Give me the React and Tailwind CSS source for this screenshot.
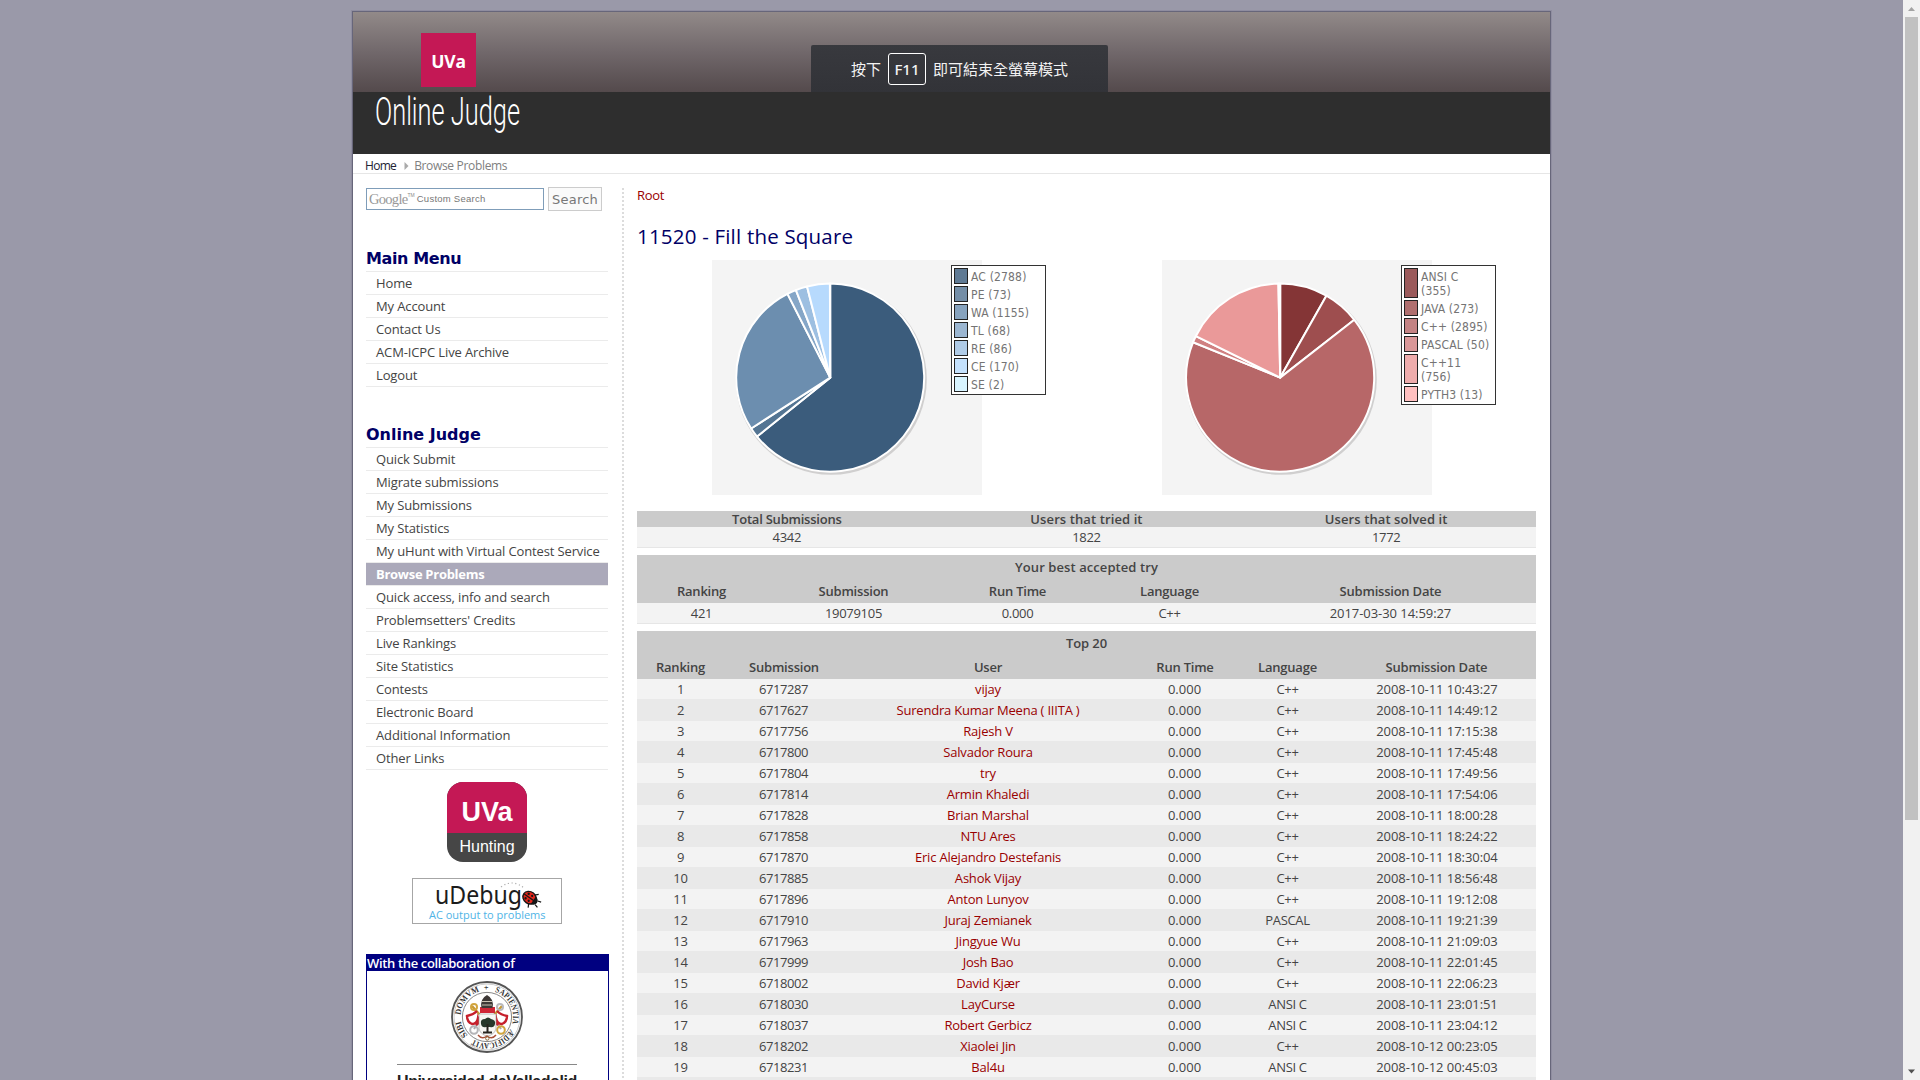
import React from 'react';

const mainMenu = ['Home', 'My Account', 'Contact Us', 'ACM-ICPC Live Archive', 'Logout'];

const judgeMenu = [
  'Quick Submit',
  'Migrate submissions',
  'My Submissions',
  'My Statistics',
  'My uHunt with Virtual Contest Service',
  'Browse Problems',
  'Quick access, info and search',
  "Problemsetters' Credits",
  'Live Rankings',
  'Site Statistics',
  'Contests',
  'Electronic Board',
  'Additional Information',
  'Other Links',
];

const verdicts = [
  { label: 'AC', count: 2788, color: '#3b5c7c' },
  { label: 'PE', count: 73, color: '#547593' },
  { label: 'WA', count: 1155, color: '#6c8eaf' },
  { label: 'TL', count: 68, color: '#85a6c7' },
  { label: 'RE', count: 86, color: '#9dbfe1' },
  { label: 'CE', count: 170, color: '#b7dafd' },
  { label: 'SE', count: 2, color: '#cff2ff' },
];

const languages = [
  { label: 'ANSI C', count: 355, color: '#843536', wrap: true },
  { label: 'JAVA', count: 273, color: '#9e4e4f' },
  { label: 'C++', count: 2895, color: '#b76768' },
  { label: 'PASCAL', count: 50, color: '#d08081' },
  { label: 'C++11', count: 756, color: '#ea9999', wrap: true },
  { label: 'PYTH3', count: 13, color: '#ffb2b2' },
];

const top = [
  ['6717287', 'vijay', 'C++', '2008-10-11 10:43:27'],
  ['6717627', 'Surendra Kumar Meena ( IIITA )', 'C++', '2008-10-11 14:49:12'],
  ['6717756', 'Rajesh V', 'C++', '2008-10-11 17:15:38'],
  ['6717800', 'Salvador Roura', 'C++', '2008-10-11 17:45:48'],
  ['6717804', 'try', 'C++', '2008-10-11 17:49:56'],
  ['6717814', 'Armin Khaledi', 'C++', '2008-10-11 17:54:06'],
  ['6717828', 'Brian Marshal', 'C++', '2008-10-11 18:00:28'],
  ['6717858', 'NTU Ares', 'C++', '2008-10-11 18:24:22'],
  ['6717870', 'Eric Alejandro Destefanis', 'C++', '2008-10-11 18:30:04'],
  ['6717885', 'Ashok Vijay', 'C++', '2008-10-11 18:56:48'],
  ['6717896', 'Anton Lunyov', 'C++', '2008-10-11 19:12:08'],
  ['6717910', 'Juraj Zemianek', 'PASCAL', '2008-10-11 19:21:39'],
  ['6717963', 'Jingyue Wu', 'C++', '2008-10-11 21:09:03'],
  ['6717999', 'Josh Bao', 'C++', '2008-10-11 22:01:45'],
  ['6718002', 'David Kjær', 'C++', '2008-10-11 22:06:23'],
  ['6718030', 'LayCurse', 'ANSI C', '2008-10-11 23:01:51'],
  ['6718037', 'Robert Gerbicz', 'ANSI C', '2008-10-11 23:04:12'],
  ['6718202', 'Xiaolei Jin', 'C++', '2008-10-12 00:23:05'],
  ['6718231', 'Bal4u', 'ANSI C', '2008-10-12 00:45:03'],
];

function Menu({ title, items, active, tracking }) {
  return (
    <section>
      <h2 className={`h-[26px] border-b border-[#ebebeb] font-['DejaVu_Sans','Open_Sans',sans-serif] text-[16px] leading-[26px] font-bold text-[#000066] ${tracking}`}>
        {title}
      </h2>
      <ul>
        {items.map((item) => (
          <li
            key={item}
            className={
              item === active
                ? 'h-[23px] border-b border-[#ebebeb] bg-[#aba9ba] bg-clip-padding pl-[10px] leading-[23px] font-bold tracking-[-0.28px] whitespace-nowrap text-white'
                : 'h-[23px] border-b border-[#ebebeb] pl-[10px] leading-[23px] tracking-[-0.13px] whitespace-nowrap'
            }
          >
            {item}
          </li>
        ))}
      </ul>
    </section>
  );
}

function Pie({ data }) {
  const cx = 118.2;
  const cy = 117.6;
  const r = 94;
  const total = data.reduce((sum, d) => sum + d.count, 0);
  let acc = 0;
  const point = (v) => {
    const a = (v / total) * Math.PI * 2 - Math.PI / 2;
    return `${(cx + r * Math.cos(a)).toFixed(2)} ${(cy + r * Math.sin(a)).toFixed(2)}`;
  };
  return (
    <svg width="270" height="235" className="block bg-[#f4f4f4]">
      <circle cx={cx + 1} cy={cy + 1.6} r={r + 1.6} fill="#d0cfcf" />
      {data.map((d) => {
        const start = point(acc);
        acc += d.count;
        const end = point(acc);
        const large = d.count / total > 0.5 ? 1 : 0;
        return (
          <path
            key={d.label}
            d={`M${cx} ${cy} L${start} A${r} ${r} 0 ${large} 1 ${end} Z`}
            fill={d.color}
            stroke="#fff"
            strokeWidth="2"
            strokeLinejoin="round"
          />
        );
      })}
    </svg>
  );
}

function Chart({ data }) {
  return (
    <div className="relative w-[270px]">
      <Pie data={data} />
      <ul className="absolute top-[5px] left-[239px] flex w-[95px] flex-col gap-[2px] border border-[#333] bg-white p-[2px] font-['DejaVu_Sans_Condensed','DejaVu_Sans',sans-serif] text-[12px] leading-[14px] tracking-[0.16px] text-[#747474]">
        {data.map((d) => (
          <li key={d.label} className="flex gap-[3px]">
            <span className="w-[14px] border border-[#222]" style={{ backgroundColor: d.color + 'd0' }} />
            <span className="pt-[2px] whitespace-nowrap">
              {d.label}
              {d.wrap ? <br /> : ' '}({d.count})
            </span>
          </li>
        ))}
      </ul>
    </div>
  );
}

const triple = 'grid grid-cols-3';
const bestCols = 'grid grid-cols-[129px_175px_153px_151px_1fr]';
const topCols = 'grid grid-cols-[87px_120px_288px_106px_99px_1fr]';

function HeadRow({ cols, cells, h = 'h-6 leading-6' }) {
  return (
    <div className={`${cols} ${h} bg-[#cbcbcb] font-semibold`}>
      {cells.map((c) => (
        <div key={c} className={c.startsWith('Users') ? 'tracking-[0.1px]' : 'tracking-[-0.22px]'}>
          {c}
        </div>
      ))}
    </div>
  );
}

function Seal() {
  return (
    <svg width="72" height="72" viewBox="0 0 72 72" className="block overflow-visible">
      <defs>
        <path id="motto" d="M19.090 56.150 A26.300 26.300 0 1 1 19.450 56.440" />
      </defs>
      <circle cx="36" cy="36" r="35" fill="#fff" stroke="#555" strokeWidth="1.8" />
      <circle cx="36" cy="36" r="33" fill="none" stroke="#aaa" strokeWidth="0.6" />
      <circle cx="36" cy="36" r="24.600" fill="none" stroke="#777" strokeWidth="0.9" />
      <g className="font-['Liberation_Serif',serif] text-[8.500px] font-bold" fill="#333">
        <text>
          <textPath href="#motto" startOffset="3" textLength="16">SIBI</textPath>
        </text>
        <text>
          <textPath href="#motto" startOffset="25" textLength="32" lengthAdjust="spacingAndGlyphs">DOMVM</textPath>
        </text>
        <text>
          <textPath href="#motto" startOffset="61.500">+</textPath>
        </text>
        <text>
          <textPath href="#motto" startOffset="72.500" textLength="40" lengthAdjust="spacingAndGlyphs">SAPIENTIA</textPath>
        </text>
        <text>
          <textPath href="#motto" startOffset="118" textLength="43" lengthAdjust="spacingAndGlyphs">ÆDIFICAVIT</textPath>
        </text>
      </g>
      <g fill="none" strokeWidth="2">
        <path d="M29 34 L21 25 M43 34 L51 25" stroke="#c79a35" strokeWidth="2.4" />
        <circle cx="23" cy="26" r="3" stroke="#d1a53f" />
        <circle cx="49" cy="26" r="3" stroke="#b9b9bd" />
        <path d="M30 38 L23 48 M43 38 L50 48" stroke="#aaa" />
        <circle cx="23" cy="49" r="3.800" stroke="#b5b5b8" />
        <circle cx="50" cy="49" r="3.800" stroke="#d1a53f" />
        <path d="M26 30 q-4 4 -10 5 q0 6 5 8 q5 0 6 -6 q2 5 -2 7 M46 30 q4 4 10 5 q0 6 -5 8 q-5 0 -6 -6 q-2 5 2 7" stroke="#c6202c" strokeWidth="2.4" />
      </g>
      <path d="M29 32 h15 v-6 h-15z" fill="#cf2636" />
      <path d="M30.500 27 q-2 -9 5.500 -13 q7.500 4 5.500 13z" fill="#3d3836" />
      <path d="M31 24 h10 M31 20.500 h10" stroke="#c9c1b2" strokeWidth="1" />
      <path d="M28 33 h17 v15 q-2 6 -8.500 7 q-6.500 -1 -8.500 -7z" fill="#f7f7f4" stroke="#999" strokeWidth="0.6" />
      <path d="M30 43 q-1 -5 4 -5 q3 -3 6 0 q5 1 4 5 q-1 4 -5 3 h-4 q-4 1 -5 -3z" fill="#26382b" />
      <path d="M36.500 43 v8 M32 51.500 h9" stroke="#26251f" strokeWidth="2" />
      <path d="M27 54 q4 5 9 1 q5 4 9 -1" fill="none" stroke="#a85038" strokeWidth="1.4" />
      <circle cx="36.300" cy="57.500" r="1.700" fill="none" stroke="#8a6a39" />
    </svg>
  );
}

function UDebug() {
  return (
    <svg width="150" height="46" viewBox="0 0 148 44" className="block overflow-visible border border-[#a6a6a6]">
      <text x="22" y="25" textLength="87" lengthAdjust="spacingAndGlyphs" className="font-['Noto_Sans','Open_Sans',sans-serif] text-[25px]" fill="#1c1c1c">
        uDebug
      </text>
      <path d="M88 8 Q100 -1 112 10" fill="none" stroke="#aaa" strokeWidth="1.1" strokeDasharray="1.200 2.600" />
      <g transform="rotate(35 117 19)">
        <ellipse cx="116.500" cy="19" rx="7" ry="6" fill="#e1261c" stroke="#161616" strokeWidth="1.400" />
        <path d="M110 19 h13" stroke="#161616" strokeWidth="1.200" />
        <path d="M121 14.500 q4.500 1 4.500 4.500 q0 3.500 -4.500 4.500z" fill="#161616" />
        <path d="M119 14 l3 -3 M119 24 l2 4 M125 17 l3.500 -1 M125 21.500 l3.500 1" stroke="#161616" strokeWidth="1.200" />
        <g fill="#161616">
          <circle cx="113.500" cy="16.300" r="1.200" />
          <circle cx="117.500" cy="16" r="1.100" />
          <circle cx="113.500" cy="21.700" r="1.200" />
          <circle cx="117.500" cy="22" r="1.100" />
        </g>
      </g>
      <text x="16" y="40" textLength="116.500" className="font-['Open_Sans',sans-serif] text-[11px]" fill="#4fb4e6">
        AC output to problems
      </text>
    </svg>
  );
}

function Sidebar() {
  return (
    <aside className="ml-[13px] w-[243px] shrink-0">
      <div className="flex h-[24px] items-center gap-1">
        <div className="flex h-[22px] w-[178px] items-center border border-[#7f9db9] pl-[2px] text-[#8c8c8c]">
          <span className="font-['Liberation_Serif',serif] text-[14.500px] leading-none tracking-[-0.7px] text-[#999]">Google</span>
          <span className="self-start pt-[3px] font-['Liberation_Sans',sans-serif] text-[5px] leading-[6px]">TM</span>
          <span className="ml-[2px] font-['Liberation_Sans',sans-serif] text-[9.500px] leading-none tracking-[0.25px] text-[#777]">Custom Search</span>
        </div>
        <button className="h-[24px] w-[54px] border border-[#ccc] bg-[#fafafa] pt-px font-['DejaVu_Sans',sans-serif] text-[13px] leading-[21px] tracking-[0.2px] text-[#777]">
          Search
        </button>
      </div>
      <div className="mt-[35px] w-[242px]">
        <Menu title="Main Menu" items={mainMenu} tracking="tracking-[-0.4px]" />
        <div className="h-[35px]" />
        <Menu title="Online Judge" items={judgeMenu} active="Browse Problems" tracking="tracking-[0px]" />
      </div>
      <div className="mt-[12px] flex w-[242px] flex-col items-center">
        <div className="flex h-[80px] w-[80px] flex-col overflow-hidden rounded-[16px] bg-[#464646] text-center font-['Liberation_Sans',sans-serif] text-white">
          <div className="h-[51px] bg-[#c41855] text-[27px] leading-[60px] font-bold">UVa</div>
          <div className="text-[16px] leading-[27px]">Hunting</div>
        </div>
        <div className="mt-[16px]">
          <UDebug />
        </div>
      </div>
      <div className="mt-[30px] h-[200px] border border-[#000080]">
        <div className="h-[16px] bg-[#000080] leading-[17px] font-semibold tracking-[-0.35px] text-white">With the collaboration of</div>
        <div className="mt-[10px] flex flex-col items-center pr-[1px]">
          <Seal />
          <div className="mt-[11px] h-px w-[180px] bg-[#888]" />
          <div className="mt-[7px] font-['Liberation_Sans',sans-serif] text-[16px] leading-[20px] font-bold tracking-[-0.4px] whitespace-nowrap text-[#222]">
            Universidad deValladolid
          </div>
        </div>
      </div>
    </aside>
  );
}

function Header() {
  return (
    <header className="h-[142px] bg-[#2e2e2e]">
      <div className="h-[80px] bg-linear-to-b from-[#928a89] via-[#71686b] to-[#544a4c]">
        <div className="flex items-start">
          <div className="mt-[21px] ml-[68px] h-[54px] w-[55px] bg-[#c41855] text-center font-['Noto_Sans','Open_Sans',sans-serif] text-[17.500px] leading-[56px] font-bold text-white">
            UVa
          </div>
          <div className="mt-[33px] ml-[335px] flex h-[47px] w-[297px] items-center justify-center gap-[7px] rounded-t-[2px] bg-linear-to-b from-[#38393e] to-[#323338] font-['Noto_Sans','Noto_Sans_CJK_TC',sans-serif] text-[15px] text-[#f3f3f3]">
            <span className="pt-[2px]">按下</span>
            <span className="h-[32px] w-[38px] rounded-[3px] border border-white text-center leading-[31px] font-medium">F11</span>
            <span className="pt-[2px]">即可結束全螢幕模式</span>
          </div>
        </div>
      </div>
      <svg width="200" height="48" className="block overflow-visible">
        <text
          x="22"
          y="33"
          textLength="145"
          lengthAdjust="spacingAndGlyphs"
          className="font-['Roboto','Open_Sans',sans-serif] text-[38px] font-light"
          fill="#fff"
        >
          Online Judge
        </text>
      </svg>
    </header>
  );
}

export default function App() {
  return (
    <div className="flex h-[1080px] w-full overflow-hidden bg-[#9a99a9] font-['Open_Sans','Noto_Sans',sans-serif] text-[13px] text-[#444]">
      <div className="flex-1">
        <div className="mt-[11px] ml-[352px] h-[1200px] w-[1199px] border border-[#67667a] bg-white shadow-[0_0_0_1px_#8f8da0]">
          <Header />
          <nav className="flex h-[20px] items-center border-b border-[#e6e6e6] pl-[12px] text-[12px] leading-[19px] tracking-[-0.33px] text-[#808080]">
            <span className="pt-[4px] tracking-[-0.7px] text-[#222233]">Home</span>
            <svg width="5" height="8" viewBox="0 0 5 8" className="mt-[4px] mr-[5px] ml-[8px]">
              <path d="M0.500 0 L4.500 4 L0.500 8z" fill="#aaa" />
            </svg>
            <span className="pt-[4px]">Browse Problems</span>
          </nav>
          <div className="flex pt-[13px]">
            <Sidebar />
            <div className="mt-[1px] ml-[13px] h-[1000px] w-[2px] shrink-0 bg-[repeating-linear-gradient(to_bottom,#dcdcdc_0px,#dcdcdc_2px,transparent_2px,transparent_4px)]" />
            <main className="ml-[13px] w-[899px] shrink-0">
              <a className="block h-[17px] leading-[17px] tracking-[-0.3px] text-[#990000]">Root</a>
              <h1 className="mt-[16px] h-[32px] text-[20.500px] leading-[32px] tracking-[0.2px] text-[#000066]">11520 - Fill the Square</h1>
              <div className="mt-[8px] flex gap-[180px] pl-[75px]">
                <Chart data={verdicts} />
                <Chart data={languages} />
              </div>
              <div className="mt-[16px] text-center">
                <HeadRow cols={triple} h="h-4 leading-4" cells={['Total Submissions', 'Users that tried it', 'Users that solved it']} />
                <div className={`${triple} h-[21px] border-b border-[#e6e6e6] bg-[#f3f3f3] leading-[21px] tracking-[-0.3px]`}>
                  <div>4342</div>
                  <div>1822</div>
                  <div>1772</div>
                </div>
              </div>
              <div className="mt-[7px] text-center">
                <div className="h-6 bg-[#cbcbcb] leading-6 font-semibold tracking-[0.08px]">Your best accepted try</div>
                <HeadRow cols={bestCols} cells={['Ranking', 'Submission', 'Run Time', 'Language', 'Submission Date']} />
                <div className={`${bestCols} h-[21px] border-b border-[#e6e6e6] bg-[#f3f3f3] leading-[21px] tracking-[-0.3px]`}>
                  <div>421</div>
                  <div>19079105</div>
                  <div>0.000</div>
                  <div>C++</div>
                  <div className="tracking-[-0.06px]">2017-03-30 14:59:27</div>
                </div>
              </div>
              <div className="mt-[7px] text-center">
                <div className="h-6 bg-[#cbcbcb] leading-6 font-semibold tracking-[-0.1px]">Top 20</div>
                <HeadRow cols={topCols} cells={['Ranking', 'Submission', 'User', 'Run Time', 'Language', 'Submission Date']} />
                {top.map(([id, user, lang, date], i) => (
                  <div
                    key={id}
                    className={`${topCols} h-[21px] border-b border-[#e9e9e9] leading-[21px] ${i % 2 ? 'bg-[#e9e9e9]' : 'bg-[#f3f3f3]'}`}
                  >
                    <div className="tracking-[-0.3px]">{i + 1}</div>
                    <div className="pr-px tracking-[-0.4px]">{id}</div>
                    <div className="tracking-[-0.2px] text-[#990000]">{user}</div>
                    <div className="pr-px">0.000</div>
                    <div className="tracking-[-0.3px]">{lang}</div>
                    <div className="pl-px tracking-[-0.06px]">{date}</div>
                  </div>
                ))}
                <div className="h-[21px] bg-[#e9e9e9]" />
              </div>
            </main>
          </div>
        </div>
      </div>
      <div className="flex w-[17px] flex-col items-center bg-[#f1f1f1]">
        <svg width="17" height="17">
          <path d="M5 11 L8.500 7 L12 11z" fill="#a3a3a3" />
        </svg>
        <div className="h-[803px] w-[13px] bg-[#c1c1c1]" />
        <svg width="17" height="17" className="mt-auto">
          <path d="M5 6.500 L8.500 10.500 L12 6.500z" fill="#505050" />
        </svg>
      </div>
    </div>
  );
}
